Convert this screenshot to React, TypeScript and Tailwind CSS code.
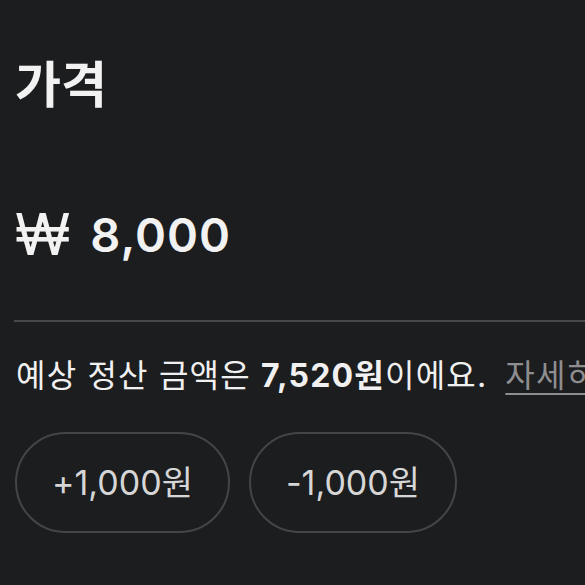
export default function App() {
  const font = { fontFamily: 'Inter, "Noto Sans CJK KR", sans-serif' };
  return (
    <main className="w-[585px] h-[585px] overflow-hidden bg-[#1c1d1f] text-[#f2f2f2]" style={font}>
      <div className="pl-[15px] pt-[52px]">
        <h1 className="text-[50px] font-bold leading-[66px]">가격</h1>
        <div className="mt-[86px] flex items-center h-[60px]">
          <span className="text-[58px] font-normal leading-none">₩</span>
          <span className="ml-[20px] text-[47px] font-semibold leading-none tracking-[1px]">8,000</span>
        </div>
      </div>
      <div className="ml-[14px] mt-[56px] h-[2px] bg-[#47484a]" />
      <div className="mt-[32px] pl-[16px] whitespace-nowrap text-[32px] leading-[44px] tracking-[1.2px] text-[#f0f0f0]">
        예상 정산 금액은 <span className="font-bold">7,520원</span>이에요.
        <span className="ml-[18px] text-[#8e8e90] underline underline-offset-[6px] decoration-[2px]">자세히 보기</span>
      </div>
      <div className="mt-[34px] pl-[15px] flex gap-[19px]">
        <button className="h-[101px] w-[215px] rounded-full border-2 border-[#444547] text-[34px] text-[#d6d6d6]">+1,000원</button>
        <button className="h-[101px] w-[208px] rounded-full border-2 border-[#444547] text-[34px] text-[#d6d6d6]">-1,000원</button>
      </div>
    </main>
  );
}
